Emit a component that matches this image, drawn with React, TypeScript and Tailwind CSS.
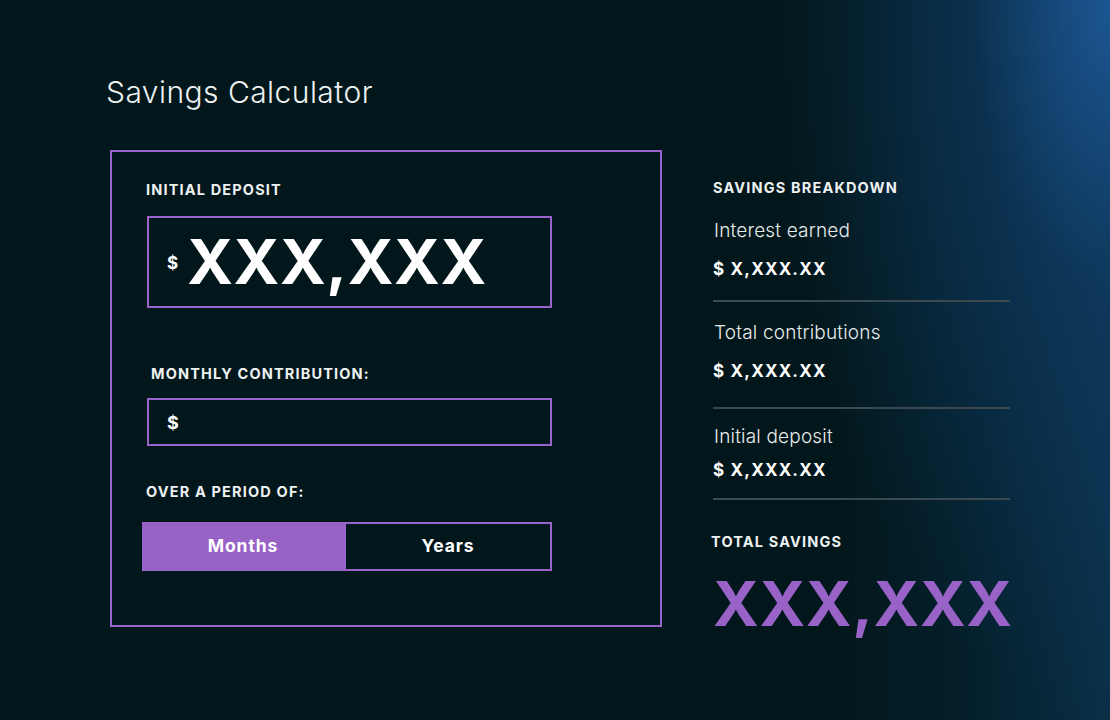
import React from "react";

const F = { fontFamily: "Inter, 'Noto Sans', sans-serif" };

export default function App() {
  return (
    <div
      className="w-full h-[720px] overflow-hidden bg-[#02171b] bg-[linear-gradient(to_right,#02171b_0%,#02171b_75%,#04202c_88%,#0a2f47_100%)]"
      style={F}
    >
      <div className="w-full h-[720px] bg-[radial-gradient(ellipse_340px_720px_at_100%_0%,rgba(30,90,155,0.9)_0%,rgba(18,65,112,0.5)_40%,rgba(10,40,70,0)_100%)]">
        <div className="pt-[74px] pl-[106px] text-[30px] font-light leading-[36px] text-[#eef1f1] tracking-[0.015em]">
          Savings Calculator
        </div>

        <div className="mt-[40px] flex">
          {/* Left box */}
          <div className="ml-[110px] w-[552px] h-[477px] border-2 border-[#9a63c9] flex flex-col pl-[34px] pt-[28px]">
            <div className="text-[14.5px] font-bold leading-[20px] tracking-[0.08em] text-[#eef1f1]">INITIAL DEPOSIT</div>
            <div className="mt-[16px] ml-[1px] w-[405px] h-[92px] border-2 border-[#9a63c9] flex items-center pl-[18px]">
              <span className="text-[17px] font-bold text-white mr-[9px] mt-[4px]">$</span>
              <span className="text-[62px] font-bold leading-none tracking-[0.01em] text-white">XXX,XXX</span>
            </div>

            <div className="mt-[56px] ml-[5px] text-[14.5px] font-bold leading-[20px] tracking-[0.08em] text-[#eef1f1]">
              MONTHLY CONTRIBUTION:
            </div>
            <div className="mt-[14px] ml-[1px] w-[405px] h-[48px] border-2 border-[#9a63c9] flex items-center pl-[18px]">
              <span className="text-[18px] font-bold text-white">$</span>
            </div>

            <div className="mt-[36px] text-[14.5px] font-bold leading-[20px] tracking-[0.08em] text-[#eef1f1]">
              OVER A PERIOD OF:
            </div>
            <div className="mt-[20px] -ml-[4px] w-[410px] h-[49px] flex">
              <div className="w-[202px] h-full bg-[#9962c7] flex items-center justify-center text-[17.5px] font-bold tracking-[0.05em] text-white">
                Months
              </div>
              <div className="flex-1 h-full border-2 border-[#9a63c9] flex items-center justify-center text-[17.5px] font-bold tracking-[0.05em] text-white">
                Years
              </div>
            </div>
          </div>

          {/* Right column */}
          <div className="ml-[51px] w-[297px] flex flex-col pt-[28px]">
            <div className="text-[14.5px] font-bold leading-[20px] tracking-[0.08em] text-[#eef1f1]">SAVINGS BREAKDOWN</div>
            <div className="mt-[22px] flex flex-col">
              <div className="flex flex-col pb-[20px] border-b-2 border-[#3b4a50]">
                <div className="text-[19px] font-light leading-[22px] tracking-[0.01em] text-[#e8ecec] pl-[1px]">Interest earned</div>
                <div className="mt-[16px] text-[17px] font-bold leading-[22px] tracking-[0.07em] text-white">$ X,XXX.XX</div>
              </div>
              <div className="flex flex-col pt-[20px] pb-[25px] border-b-2 border-[#3b4a50]">
                <div className="text-[19px] font-light leading-[22px] tracking-[0.01em] text-[#e8ecec] pl-[1px]">Total contributions</div>
                <div className="mt-[16px] text-[17px] font-bold leading-[22px] tracking-[0.07em] text-white">$ X,XXX.XX</div>
              </div>
              <div className="flex flex-col pt-[17px] pb-[17px] border-b-2 border-[#3b4a50]">
                <div className="text-[19px] font-light leading-[22px] tracking-[0.01em] text-[#e8ecec] pl-[1px]">Initial deposit</div>
                <div className="mt-[11px] text-[17px] font-bold leading-[22px] tracking-[0.07em] text-white">$ X,XXX.XX</div>
              </div>
            </div>
            <div className="mt-[32px] -ml-[2px] text-[14.5px] font-bold leading-[20px] tracking-[0.08em] text-[#eef1f1]">TOTAL SAVINGS</div>
            <div className="mt-[21px] text-[62px] font-bold leading-none tracking-[0.01em] text-[#9962c7]">XXX,XXX</div>
          </div>
        </div>
      </div>
    </div>
  );
}
